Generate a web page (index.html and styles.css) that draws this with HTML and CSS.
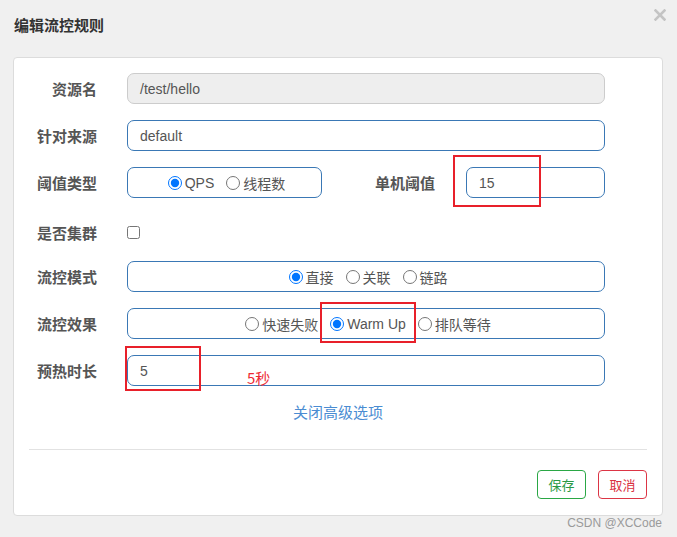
FILE: index.html
```html
<!DOCTYPE html>
<html lang="zh">
<head>
<meta charset="utf-8">
<title>编辑流控规则</title>
<link rel="stylesheet" href="styles.css">
</head>
<body>
<div class="dialog">
  <header class="dlg-head">
    <h1 class="dlg-title">编辑流控规则</h1>
    <span class="close" aria-label="关闭">
      <svg width="12" height="12" viewBox="0 0 12 12"><path d="M1.5 1.5 L10.5 10.5 M10.5 1.5 L1.5 10.5" stroke="#c4c4c4" stroke-width="2.6" stroke-linecap="square"/></svg>
    </span>
  </header>

  <div class="card">
    <form class="form">
      <div class="row">
        <label class="lbl">资源名</label>
        <div class="field wide disabled">/test/hello</div>
      </div>
      <div class="row">
        <label class="lbl">针对来源</label>
        <div class="field wide">default</div>
      </div>
      <div class="row">
        <label class="lbl">阈值类型</label>
        <div class="field narrow radios">
          <label class="opt"><input type="radio" name="grade" checked>QPS</label>
          <label class="opt"><input type="radio" name="grade">线程数</label>
        </div>
        <label class="lbl lbl2">单机阈值</label>
        <div class="field count">15</div>
      </div>
      <div class="row check">
        <label class="lbl">是否集群</label>
        <input class="cb" type="checkbox">
      </div>
      <div class="row">
        <label class="lbl">流控模式</label>
        <div class="field wide radios">
          <label class="opt"><input type="radio" name="mode" checked>直接</label>
          <label class="opt"><input type="radio" name="mode">关联</label>
          <label class="opt"><input type="radio" name="mode">链路</label>
        </div>
      </div>
      <div class="row">
        <label class="lbl">流控效果</label>
        <div class="field wide radios">
          <label class="opt"><input type="radio" name="effect">快速失败</label>
          <label class="opt"><input type="radio" name="effect" checked>Warm Up</label>
          <label class="opt"><input type="radio" name="effect">排队等待</label>
        </div>
      </div>
      <div class="row">
        <label class="lbl">预热时长</label>
        <div class="field wide">5</div>
      </div>
    </form>

    <div class="toggle"><a class="toggle-link">关闭高级选项</a></div>
    <div class="sep"></div>
    <div class="actions">
      <button class="btn save" type="button">保存</button>
      <button class="btn cancel" type="button">取消</button>
    </div>
  </div>

  <div class="mark mark-a"></div>
  <div class="mark mark-b"></div>
  <div class="mark mark-c"></div>
  <div class="note">5秒</div>
  <div class="watermark">CSDN @XCCode</div>
</div>
</body>
</html>
```

FILE: styles.css
```css
* { box-sizing: border-box; }
html, body {
  margin: 0;
  padding: 0;
}
body {
  background: #f0f0f0;
  font-family: "Liberation Sans", "Noto Sans CJK SC", sans-serif;
  color: #555;
  width: 677px;
  height: 537px;
  overflow: hidden;
}
.dialog {
  position: relative;
  width: 677px;
  height: 537px;
}
.dlg-head {
  height: 57px;
  padding: 15px 14px 0 14px;
  display: flex;
  justify-content: space-between;
  align-items: flex-start;
}
.dlg-title {
  margin: 0;
  font-size: 15px;
  line-height: 20px;
  font-weight: bold;
  color: #333;
  font-family: "Noto Sans CJK SC", sans-serif;
}
.close {
  position: absolute;
  top: 9px;
  right: 11px;
  width: 12px;
  height: 12px;
  display: block;
  line-height: 0;
}
.card {
  margin: 0 14px 0 13px;
  background: #fff;
  border: 1px solid #dcdcdc;
  border-radius: 4px;
  padding: 15px 0 16px 0;
}
.form { margin: 0; }
.row {
  display: flex;
  align-items: center;
  height: 31px;
  margin-bottom: 16px;
}
.row.check { padding-top: 5px; }
.lbl {
  width: 83px;
  flex: none;
  text-align: right;
  font-family: "Noto Sans CJK SC", sans-serif;
  font-size: 15px;
  font-weight: bold;
  color: #555;
  margin-right: 30px;
  white-space: nowrap;
}
.lbl2 {
  width: 113px;
  margin-right: 31px;
}
.field {
  height: 31px;
  border: 1px solid #3a78b5;
  border-radius: 7px;
  padding: 0 12px;
  display: flex;
  align-items: center;
  font-size: 14px;
  color: #555;
  background: #fff;
}
.field.wide { width: 478px; }
.field.narrow { width: 195px; }
.field.count { width: 139px; }
.field.disabled {
  background: #eeeeee;
  border-color: #cccccc;
}
.radios {
  justify-content: center;
  gap: 8px;
  padding: 0;
}
.opt {
  display: flex;
  align-items: center;
  font-size: 14px;
  color: #555;
  font-family: "Liberation Sans", "Noto Sans CJK SC", sans-serif;
  white-space: nowrap;
}
.opt input {
  margin: 0 3px 0 4px;
  width: 14px;
  height: 14px;
}
.cb {
  margin: 0;
  width: 13px;
  height: 13px;
}
.toggle {
  text-align: center;
  margin-top: 1px;
  height: 20px;
  line-height: 20px;
}
.toggle-link {
  font-family: "Noto Sans CJK SC", sans-serif;
  font-size: 15px;
  color: #4a8cd2;
  cursor: pointer;
}
.sep {
  margin: 27px 15px 0 15px;
  border-top: 1px solid #e2e2e2;
}
.actions {
  display: flex;
  justify-content: flex-end;
  gap: 12px;
  padding: 20px 15px 0 0;
}
.btn {
  width: 49px;
  height: 29px;
  background: #fff;
  border-radius: 4px;
  font-family: "Noto Sans CJK SC", sans-serif;
  font-size: 13px;
  padding: 0;
}
.btn.save {
  border: 1px solid #2aa745;
  color: #2a9a45;
}
.btn.cancel {
  border: 1px solid #dc3545;
  color: #d9303f;
}
.mark {
  position: absolute;
  border: 2px solid #e8202a;
}
.mark-a { left: 453px; top: 155px; width: 88px; height: 52px; }
.mark-b { left: 320px; top: 302px; width: 96px; height: 41px; }
.mark-c { left: 125px; top: 346px; width: 76px; height: 45px; }
.note {
  position: absolute;
  left: 247px;
  top: 368px;
  font-family: "Noto Sans CJK SC", sans-serif;
  font-size: 15px;
  line-height: 20px;
  color: #ee2a35;
}
.watermark {
  position: absolute;
  right: 15px;
  top: 515px;
  font-size: 12px;
  line-height: 16px;
  color: #9a9a9a;
  font-family: "Liberation Sans", sans-serif;
}
```
